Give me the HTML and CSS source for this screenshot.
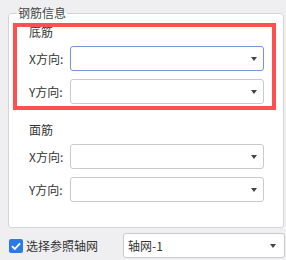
FILE: index.html
```html
<!DOCTYPE html>
<html lang="zh">
<head>
    <meta charset="UTF-8">
    <title>钢筋信息</title>
    <link rel="stylesheet" href="styles.css">
</head>
<body>
    <fieldset class="group">
        <legend>钢筋信息</legend>
        <div class="sec-title first">底筋</div>
        <div class="row">
            <span class="label">X方向:</span>
            <div class="select focus"><span class="arrow"></span></div>
        </div>
        <div class="row">
            <span class="label">Y方向:</span>
            <div class="select"><span class="arrow"></span></div>
        </div>
        <div class="sec-title">面筋</div>
        <div class="row">
            <span class="label">X方向:</span>
            <div class="select"><span class="arrow"></span></div>
        </div>
        <div class="row">
            <span class="label">Y方向:</span>
            <div class="select"><span class="arrow"></span></div>
        </div>
    </fieldset>
    <div class="footer">
        <span class="check">
            <svg width="14" height="14" viewBox="0 0 14 14"><path d="M3 7.2 L5.8 10 L11 4.3" fill="none" stroke="#fff" stroke-width="1.8"/></svg>
        </span>
        <span class="check-text">选择参照轴网</span>
        <div class="select combo"><span class="value">轴网-1</span><span class="arrow"></span></div>
    </div>
    <div class="highlight"></div>
</body>
</html>
```

FILE: styles.css
```css
body {
    margin: 0;
    padding-top: 6px;
    width: 286px;
    height: 260px;
    box-sizing: border-box;
    background: #efeff1;
    font-family: "Noto Sans CJK SC", "Noto Sans", sans-serif;
    font-size: 12px;
    color: #333;
    position: relative;
    overflow: hidden;
}
.group {
    margin: 0 2px 0 8px;
    padding: 0 0 25px;
    border: 1px solid #d4d4d4;
    border-radius: 3px;
    background: #fff;
}
.group legend {
    margin-left: 8px;
    padding: 0 1px;
    line-height: 14px;
    font-size: 12px;
    color: #444;
}
.sec-title {
    padding-left: 20px;
    line-height: 16px;
    margin-top: 18px;
}
.sec-title.first {
    margin-top: 4px;
}
.row {
    display: flex;
    align-items: center;
    padding: 0 19px 0 20px;
    margin-top: 8px;
}
.sec-title + .row {
    margin-top: 6px;
}
.label {
    width: 41px;
    line-height: 16px;
}
.select {
    flex: 1;
    height: 25px;
    box-sizing: border-box;
    border: 1px solid #cacaca;
    border-radius: 3px;
    background: #fff;
    position: relative;
    display: flex;
    align-items: center;
}
.select.focus {
    border-color: #7196dc;
}
.arrow {
    position: absolute;
    right: 6px;
    top: 10px;
    width: 0;
    height: 0;
    border-left: 3px solid transparent;
    border-right: 3px solid transparent;
    border-top: 4px solid #444;
}
.footer {
    display: flex;
    align-items: center;
    margin-top: 5px;
    padding-left: 9px;
}
.check {
    width: 14px;
    height: 14px;
    border-radius: 2px;
    background: #2c7be5;
    margin-right: 3px;
    display: flex;
}
.check-text {
    line-height: 16px;
}
.select.combo {
    flex: none;
    width: 162px;
    margin-left: auto;
    margin-right: 1px;
    padding-left: 4px;
}
.combo .arrow {
    right: 8px;
}
.highlight {
    position: absolute;
    left: 13px;
    top: 23px;
    width: 263px;
    height: 87px;
    box-sizing: border-box;
    border: 4px solid #fd5050;
}
```
